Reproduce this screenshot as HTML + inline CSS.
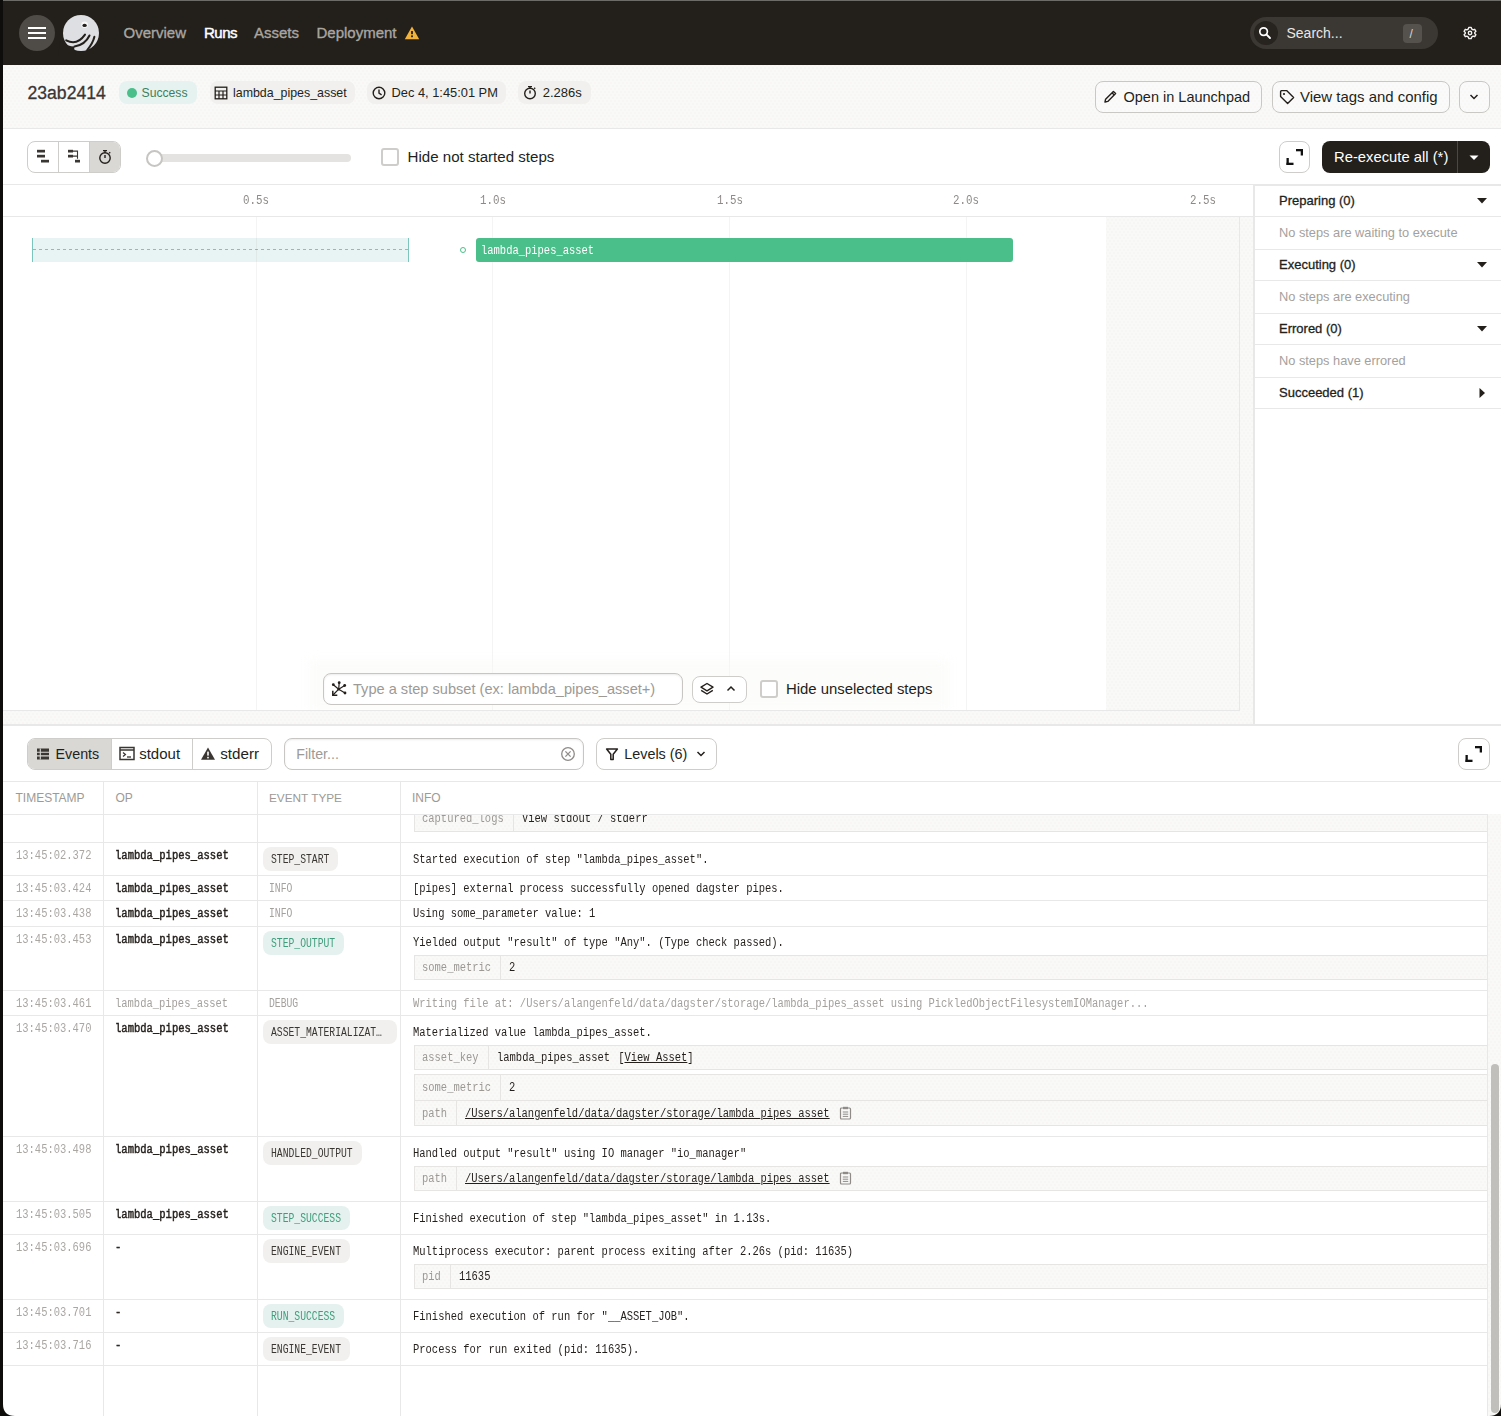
<!DOCTYPE html>
<html><head><meta charset="utf-8">
<style>
*{box-sizing:border-box;margin:0;padding:0}
html,body{width:1501px;height:1416px;overflow:hidden;background:#fff}
body{position:relative;font-family:"Liberation Sans",sans-serif;color:#231f1b}
.a{position:absolute}
.t{position:absolute;white-space:nowrap;line-height:20px;height:20px}
.dots{background-color:#f9f9f8;background-image:radial-gradient(circle,#f0efed 0.5px,transparent 0.8px),radial-gradient(circle,#f0efed 0.5px,transparent 0.8px);background-size:4px 6px;background-position:0 0,2px 3px}
</style></head><body>

<div class="a" style="left:3px;top:1px;width:1498px;height:64px;background:#231f1b"></div>
<div class="a" style="left:19px;top:15px;width:36px;height:36px;background:#4f4b47;border-radius:50%"></div>
<div class="a" style="left:28px;top:27px;width:18px;height:2.2px;background:#fff"></div>
<div class="a" style="left:28px;top:32px;width:18px;height:2.2px;background:#fff"></div>
<div class="a" style="left:28px;top:37px;width:18px;height:2.2px;background:#fff"></div>
<svg class="a" style="left:58px;top:10px" width="46" height="46" viewBox="0 0 46 46">
<circle cx="23" cy="23" r="18" fill="#dedfe3"/>
<path d="M2 31.5 Q10 36.5 16.6 36.6 Q15.4 39.6 17.8 41.4 L17 46 L0 46 Z" fill="#231f1b"/>
<path d="M8.2 30.3 Q19 36 27 24.6" stroke="#231f1b" stroke-width="2" fill="none" stroke-linecap="round"/>
<path d="M16.5 36.4 Q27 35 31.5 25.5" stroke="#231f1b" stroke-width="2" fill="none" stroke-linecap="round"/>
<path d="M29.2 40.2 Q35 33 36.4 26.8" stroke="#231f1b" stroke-width="2" fill="none" stroke-linecap="round"/>
<circle cx="26.6" cy="14.8" r="3.3" fill="#f7f7f8"/>
<ellipse cx="26.6" cy="15.4" rx="2.2" ry="1.6" fill="#231f1b"/>
</svg>
<div class="t" style="left:123.5px;top:23.00px;font-size:15px;color:#a9a6a2;font-weight:400;font-family:'Liberation Sans',sans-serif;letter-spacing:0px;-webkit-text-stroke:0.35px #a9a6a2;">Overview</div>
<div class="t" style="left:204px;top:23.00px;font-size:15px;color:#ffffff;font-weight:400;font-family:'Liberation Sans',sans-serif;letter-spacing:-0.5px;-webkit-text-stroke:0.45px #fff;">Runs</div>
<div class="t" style="left:254px;top:23.00px;font-size:15px;color:#a9a6a2;font-weight:400;font-family:'Liberation Sans',sans-serif;letter-spacing:0px;-webkit-text-stroke:0.35px #a9a6a2;">Assets</div>
<div class="t" style="left:316.5px;top:23.00px;font-size:15px;color:#a9a6a2;font-weight:400;font-family:'Liberation Sans',sans-serif;letter-spacing:0px;-webkit-text-stroke:0.35px #a9a6a2;">Deployment</div>
<svg class="a" style="left:404px;top:25px" width="16" height="16" viewBox="0 0 16 16"><path d="M8 1.5 L15.2 14.2 L0.8 14.2 Z" fill="#f2b33d"/><rect x="7.1" y="6" width="1.8" height="3.2" fill="#231f1b"/><rect x="7.1" y="10.4" width="1.8" height="1.8" fill="#231f1b"/></svg>
<div class="a" style="left:1250px;top:17px;width:188px;height:32px;background:#3b3733;border-radius:16px"></div>
<div class="a" style="left:1254px;top:21px;width:24px;height:24px;background:#27231f;border-radius:50%"></div>
<svg class="a" style="left:1258px;top:26px" width="14" height="14" viewBox="0 0 14 14"><circle cx="5.6" cy="5.6" r="3.8" stroke="#fff" stroke-width="1.7" fill="none"/><path d="M8.4 8.4 L12 12" stroke="#fff" stroke-width="1.9" stroke-linecap="round"/></svg>
<div class="t" style="left:1286.5px;top:23.00px;font-size:14px;color:#e9e7e4;font-weight:400;font-family:'Liberation Sans',sans-serif;letter-spacing:0px;">Search...</div>
<div class="a" style="left:1403px;top:24px;width:19px;height:19px;background:#55514c;border-radius:4px"></div>
<div class="t" style="left:1409.5px;top:23.50px;font-size:12px;color:#d9d7d4;font-weight:400;font-family:'Liberation Sans',sans-serif;letter-spacing:0px;">/</div>
<svg class="a" style="left:1462px;top:25px" width="16" height="16" viewBox="0 0 16 16"><g transform="translate(8 8) scale(0.86)" fill="none" stroke="#f4f3f1" stroke-width="1.6">
<path d="M-1.4 -6.6 L1.4 -6.6 L1.9 -4.7 L3.6 -3.7 L5.5 -4.3 L6.9 -1.9 L5.5 -0.6 L5.5 0.6 L6.9 1.9 L5.5 4.3 L3.6 3.7 L1.9 4.7 L1.4 6.6 L-1.4 6.6 L-1.9 4.7 L-3.6 3.7 L-5.5 4.3 L-6.9 1.9 L-5.5 0.6 L-5.5 -0.6 L-6.9 -1.9 L-5.5 -4.3 L-3.6 -3.7 L-1.9 -4.7 Z" stroke-linejoin="round"/>
<circle r="2"/></g></svg>
<div class="a" style="left:3px;top:65px;width:1498px;height:63px;background:#f9f9f8"></div>
<div class="a dots" style="left:3px;top:65px;width:1498px;height:63px"></div>
<div class="a" style="left:3px;top:128px;width:1498px;height:1px;background:#e8e8e8"></div>
<div class="t" style="left:27.5px;top:83.00px;font-size:17.6px;color:#3a3733;font-weight:400;font-family:'Liberation Sans',sans-serif;letter-spacing:0px;-webkit-text-stroke:0.3px #3a3733;">23ab2414</div>
<div class="a" style="left:119px;top:81px;width:78px;height:23px;background:#e6f2f0;border-radius:8px"></div>
<div class="a" style="left:127px;top:88px;width:10px;height:10px;background:#4bbf8a;border-radius:50%"></div>
<div class="t" style="left:141.5px;top:82.80px;font-size:12.2px;color:#3d7f60;font-weight:400;font-family:'Liberation Sans',sans-serif;letter-spacing:0px;">Success</div>
<div class="a" style="left:209.5px;top:81px;width:145px;height:23px;background:#f1f0ee;border-radius:8px"></div>
<svg class="a" style="left:214px;top:86px" width="14" height="14" viewBox="0 0 14 14"><rect x="1.2" y="1.2" width="11.6" height="11.6" stroke="#231f1b" stroke-width="1.3" fill="none"/><path d="M1 5 H13 M1 9 H13 M5 5 V13 M9 5 V13" stroke="#231f1b" stroke-width="1.2"/></svg>
<div class="t" style="left:233px;top:82.80px;font-size:12.4px;color:#231f1b;font-weight:400;font-family:'Liberation Sans',sans-serif;letter-spacing:0px;">lambda_pipes_asset</div>
<div class="a" style="left:367px;top:81px;width:138.5px;height:23px;background:#f1f0ee;border-radius:8px"></div>
<svg class="a" style="left:372px;top:86px" width="14" height="14" viewBox="0 0 14 14"><circle cx="7" cy="7" r="5.8" stroke="#231f1b" stroke-width="1.4" fill="none"/><path d="M7 3.6 V7.2 L9.6 8.8" stroke="#231f1b" stroke-width="1.4" fill="none"/></svg>
<div class="t" style="left:391.5px;top:82.80px;font-size:12.85px;color:#231f1b;font-weight:400;font-family:'Liberation Sans',sans-serif;letter-spacing:0px;">Dec 4, 1:45:01 PM</div>
<div class="a" style="left:518px;top:81px;width:72.5px;height:23px;background:#f1f0ee;border-radius:8px"></div>
<svg class="a" style="left:523px;top:85px" width="14" height="15" viewBox="0 0 14 15"><circle cx="7" cy="8.5" r="5.3" stroke="#231f1b" stroke-width="1.4" fill="none"/><path d="M5 1.6 H9 M7 2 V3.2 M7 5.6 V8.6 M11.2 3.8 L12.2 2.8" stroke="#231f1b" stroke-width="1.4" fill="none"/></svg>
<div class="t" style="left:542.7px;top:82.80px;font-size:13px;color:#231f1b;font-weight:400;font-family:'Liberation Sans',sans-serif;letter-spacing:0px;">2.286s</div>
<div class="a" style="left:1095px;top:81px;width:167px;height:32px;background:rgba(255,255,255,0.25);border:1px solid #c9c8c5;border-radius:8px"></div>
<svg class="a" style="left:1103px;top:89px" width="15" height="15" viewBox="0 0 15 15"><path d="M2 13 L2.6 10.2 L10.4 2.4 L12.6 4.6 L4.8 12.4 Z M9 3.8 L11.2 6" stroke="#231f1b" stroke-width="1.4" fill="none" stroke-linejoin="round"/></svg>
<div class="t" style="left:1123.5px;top:87.00px;font-size:14.5px;color:#231f1b;font-weight:400;font-family:'Liberation Sans',sans-serif;letter-spacing:0px;">Open in Launchpad</div>
<div class="a" style="left:1271.5px;top:81px;width:178px;height:32px;background:rgba(255,255,255,0.25);border:1px solid #c9c8c5;border-radius:8px"></div>
<svg class="a" style="left:1279px;top:89px" width="16" height="16" viewBox="0 0 16 16"><path d="M1.6 2.4 L1.6 7.6 L8.6 14.6 L14.6 8.6 L7.6 1.6 L2.4 1.6 Z" stroke="#231f1b" stroke-width="1.4" fill="none" stroke-linejoin="round"/><circle cx="5" cy="5" r="1.1" fill="#231f1b"/></svg>
<div class="t" style="left:1300px;top:87.00px;font-size:14.95px;color:#231f1b;font-weight:400;font-family:'Liberation Sans',sans-serif;letter-spacing:0px;">View tags and config</div>
<div class="a" style="left:1458.5px;top:81px;width:31px;height:32px;background:rgba(255,255,255,0.25);border:1px solid #c9c8c5;border-radius:8px"></div>
<svg class="a" style="left:1468px;top:93px" width="12" height="8" viewBox="0 0 12 8"><path d="M2.5 2 L6 5.5 L9.5 2" stroke="#231f1b" stroke-width="1.5" fill="none"/></svg>
<div class="a" style="left:3px;top:129px;width:1498px;height:55px;background:#fff"></div>
<div class="a" style="left:3px;top:184px;width:1250px;height:1px;background:#e8e8e8"></div>
<div class="a" style="left:1253px;top:184px;width:248px;height:2px;background:#e8e8e8"></div>
<div class="a" style="left:27px;top:141px;width:94px;height:32px;background:#fff;border:1px solid #cfcdca;border-radius:8px;overflow:hidden"></div>
<div class="a" style="left:89px;top:142px;width:31px;height:30px;background:#dad8d5;border-radius:0 7px 7px 0"></div>
<div class="a" style="left:58px;top:142px;width:1px;height:30px;background:#cfcdca"></div>
<div class="a" style="left:89px;top:142px;width:1px;height:30px;background:#cfcdca"></div>
<svg class="a" style="left:36px;top:149px" width="16" height="16" viewBox="0 0 16 16"><rect x="1" y="0.8" width="8" height="2.7" fill="#3a3733"/><rect x="1" y="5.8" width="8" height="2.7" fill="#3a3733"/><rect x="5" y="10.8" width="8" height="2.7" fill="#3a3733"/></svg>
<svg class="a" style="left:67px;top:149px" width="16" height="16" viewBox="0 0 16 16"><rect x="1" y="0.8" width="5" height="2.7" fill="#3a3733"/><rect x="1" y="5.8" width="5" height="2.7" fill="#3a3733"/><rect x="8" y="10.8" width="5" height="2.7" fill="#3a3733"/><path d="M6 2.1 H10.5 V9.8 M6 7.1 H10.5" stroke="#3a3733" stroke-width="1.1" fill="none"/></svg>
<svg class="a" style="left:97px;top:149px" width="16" height="16" viewBox="0 0 16 16"><circle cx="8" cy="9" r="5.2" stroke="#231f1b" stroke-width="1.4" fill="none"/><path d="M6 1.6 H10 M8 2 V3.6 M8 6 V9 M12.2 4.2 L13.2 3.2" stroke="#231f1b" stroke-width="1.4" fill="none"/></svg>
<div class="a" style="left:154px;top:154px;width:197px;height:8px;background:#e4e3e1;border-radius:4px"></div>
<div class="a" style="left:145.5px;top:149.5px;width:17px;height:17px;background:#fff;border:2px solid #c7c5c2;border-radius:50%"></div>
<div class="a" style="left:381px;top:148px;width:18px;height:18px;background:#fff;border:2px solid #cfcdca;border-radius:3px"></div>
<div class="t" style="left:407.5px;top:147.00px;font-size:15.1px;color:#231f1b;font-weight:400;font-family:'Liberation Sans',sans-serif;letter-spacing:0px;">Hide not started steps</div>
<div class="a" style="left:1278.5px;top:141px;width:31px;height:32px;background:#fff;border:1px solid #cfcdca;border-radius:8px"></div>
<svg class="a" style="left:1278.5px;top:141px" width="31" height="32" viewBox="0 0 31 32"><rect x="17" y="8" width="7" height="2.3" fill="#111"/><rect x="21.7" y="8" width="2.3" height="6.5" fill="#111"/><rect x="7.5" y="17" width="2.3" height="7" fill="#111"/><rect x="7.5" y="21.7" width="7" height="2.3" fill="#111"/></svg>
<div class="a" style="left:1322px;top:141px;width:168px;height:32px;background:#231f1b;border-radius:8px"></div>
<div class="a" style="left:1457px;top:141px;width:1px;height:32px;background:#4b4743"></div>
<div class="t" style="left:1334px;top:147.00px;font-size:14.8px;color:#ffffff;font-weight:400;font-family:'Liberation Sans',sans-serif;letter-spacing:0px;">Re-execute all (*)</div>
<svg class="a" style="left:1468px;top:154px" width="12" height="8" viewBox="0 0 12 8"><path d="M1.5 1.5 L10.5 1.5 L6 6 Z" fill="#fff"/></svg>
<div class="a" style="left:3px;top:185px;width:1250px;height:31px;background:#fff"></div>
<div class="a" style="left:3px;top:216px;width:1500px;height:1px;background:#e8e8e8"></div>
<div class="a" style="left:1253px;top:186px;width:2px;height:538px;background:#e8e8e8"></div>
<div class="t" style="left:243px;top:191.26px;font-size:12px;color:#8d8a86;font-weight:400;font-family:'Liberation Mono',monospace;letter-spacing:0px;transform:scaleX(0.9);transform-origin:0 0;">0.5s</div>
<div class="t" style="left:479.5px;top:191.26px;font-size:12px;color:#8d8a86;font-weight:400;font-family:'Liberation Mono',monospace;letter-spacing:0px;transform:scaleX(0.9);transform-origin:0 0;">1.0s</div>
<div class="t" style="left:716.5px;top:191.26px;font-size:12px;color:#8d8a86;font-weight:400;font-family:'Liberation Mono',monospace;letter-spacing:0px;transform:scaleX(0.9);transform-origin:0 0;">1.5s</div>
<div class="t" style="left:953px;top:191.26px;font-size:12px;color:#8d8a86;font-weight:400;font-family:'Liberation Mono',monospace;letter-spacing:0px;transform:scaleX(0.9);transform-origin:0 0;">2.0s</div>
<div class="t" style="left:1189.5px;top:191.26px;font-size:12px;color:#8d8a86;font-weight:400;font-family:'Liberation Mono',monospace;letter-spacing:0px;transform:scaleX(0.9);transform-origin:0 0;">2.5s</div>
<div class="a" style="left:3px;top:217px;width:1237px;height:493px;background:#fff"></div>
<div class="a" style="left:1239px;top:217px;width:1px;height:493px;background:#e9e8e6"></div>
<div class="a" style="left:32px;top:238px;width:377px;height:24px;background:#e8f4f3"></div>
<div class="a" style="left:32px;top:238px;width:1px;height:24px;background:#7cc5bc"></div>
<div class="a" style="left:408px;top:238px;width:1px;height:24px;background:#7cc5bc"></div>
<div class="a" style="left:33px;top:249px;width:375px;height:1px;background-image:linear-gradient(90deg,#7cc5bc 50%,transparent 50%);background-size:6px 1px"></div>
<div class="a" style="left:256px;top:217px;width:1px;height:493px;background:rgba(0,0,0,0.045)"></div>
<div class="a" style="left:492px;top:217px;width:1px;height:493px;background:rgba(0,0,0,0.045)"></div>
<div class="a" style="left:729px;top:217px;width:1px;height:493px;background:rgba(0,0,0,0.045)"></div>
<div class="a" style="left:966px;top:217px;width:1px;height:493px;background:rgba(0,0,0,0.045)"></div>
<div class="a" style="left:1202px;top:217px;width:1px;height:493px;background:rgba(0,0,0,0.045)"></div>
<div class="a dots" style="left:1106px;top:217px;width:134px;height:493px"></div>
<div class="a" style="left:460px;top:246.8px;width:6px;height:6px;border:1.4px solid #4bbf8a;border-radius:50%;background:#fff"></div>
<div class="a" style="left:476px;top:238px;width:537px;height:24px;background:#4bbf8a;border-radius:3px"></div>
<div class="t" style="left:480.5px;top:240.76px;font-size:12px;color:#ffffff;font-weight:400;font-family:'Liberation Mono',monospace;letter-spacing:0px;transform:scaleX(0.873);transform-origin:0 0;">lambda_pipes_asset</div>
<div class="a" style="left:309px;top:660px;width:640px;height:50px;background:rgba(249,249,247,0.45);filter:blur(5px)"></div>
<div class="a" style="left:323px;top:673px;width:360px;height:32px;background:#fff;border:1px solid #c8c6c3;border-radius:8px;box-shadow:inset 0 1px 2px rgba(0,0,0,0.08)"></div>
<svg class="a" style="left:331px;top:681px" width="17" height="17" viewBox="0 0 17 17"><g stroke="#231f1b" stroke-width="1.2" fill="none"><path d="M7.7 8.2 L8.2 1.5 M7.7 8.2 L2.3 3.7 M7.7 8.2 L13.7 4.5 M7.7 8.2 L14 12 M7.7 8.2 L2 14"/><path d="M1.8 9.8 V14.3 H6.3" stroke-width="1.5"/></g><g fill="#231f1b"><circle cx="8.2" cy="1.7" r="1.4"/><circle cx="2.3" cy="3.7" r="1.4"/><circle cx="13.7" cy="4.5" r="1.4"/><circle cx="14" cy="12" r="1.4"/><circle cx="7.7" cy="8.2" r="1.3"/></g></svg>
<div class="t" style="left:353px;top:679.00px;font-size:14.6px;color:#9d9a96;font-weight:400;font-family:'Liberation Sans',sans-serif;letter-spacing:0px;">Type a step subset (ex: lambda_pipes_asset+)</div>
<div class="a" style="left:691.5px;top:675.5px;width:55.5px;height:27.5px;background:#fff;border:1px solid #cfcdca;border-radius:8px"></div>
<svg class="a" style="left:699px;top:682px" width="16" height="14" viewBox="0 0 16 14"><path d="M8 1.5 L14 5.2 L8 8.9 L2 5.2 Z" stroke="#231f1b" stroke-width="1.4" fill="none" stroke-linejoin="round"/><path d="M2.2 8.3 L8 12 L13.8 8.3" stroke="#231f1b" stroke-width="1.4" fill="none"/></svg>
<svg class="a" style="left:725px;top:684px" width="12" height="10" viewBox="0 0 12 10"><path d="M2.5 6.5 L6 3 L9.5 6.5" stroke="#231f1b" stroke-width="1.5" fill="none"/></svg>
<div class="a" style="left:759.5px;top:680px;width:18px;height:18px;background:#fff;border:2px solid #cfcdca;border-radius:3px"></div>
<div class="t" style="left:786px;top:679.00px;font-size:14.9px;color:#231f1b;font-weight:400;font-family:'Liberation Sans',sans-serif;letter-spacing:0px;">Hide unselected steps</div>
<div class="a" style="left:3px;top:710px;width:1237px;height:1px;background:#e8e8e8"></div>
<div class="a" style="left:1239px;top:217px;width:1px;height:494px;background:#e8e8e8"></div>
<div class="a dots" style="left:3px;top:711px;width:1250px;height:13px"></div>
<div class="a dots" style="left:1240px;top:217px;width:13px;height:494px"></div>
<div class="a" style="left:3px;top:724px;width:1498px;height:2px;background:#e8e8e8"></div>
<div class="a" style="left:1255px;top:186px;width:246px;height:538px;background:#fff"></div>
<div class="a" style="left:1255px;top:216px;width:246px;height:1px;background:#e8e8e8"></div>
<div class="t" style="left:1279px;top:191.00px;font-size:13px;color:#231f1b;font-weight:400;font-family:'Liberation Sans',sans-serif;letter-spacing:0px;-webkit-text-stroke:0.3px #231f1b;">Preparing (0)</div>
<svg class="a" style="left:1476px;top:196px" width="12" height="10" viewBox="0 0 12 10"><path d="M1 2 L11 2 L6 7.5 Z" fill="#231f1b"/></svg>
<div class="a" style="left:1255px;top:216px;width:246px;height:1px;background:#e8e8e8"></div>
<div class="t" style="left:1279px;top:223.00px;font-size:12.8px;color:#a4a19d;font-weight:400;font-family:'Liberation Sans',sans-serif;letter-spacing:0px;">No steps are waiting to execute</div>
<div class="a" style="left:1255px;top:249px;width:246px;height:1px;background:#e8e8e8"></div>
<div class="t" style="left:1279px;top:255.00px;font-size:13px;color:#231f1b;font-weight:400;font-family:'Liberation Sans',sans-serif;letter-spacing:0px;-webkit-text-stroke:0.3px #231f1b;">Executing (0)</div>
<svg class="a" style="left:1476px;top:260px" width="12" height="10" viewBox="0 0 12 10"><path d="M1 2 L11 2 L6 7.5 Z" fill="#231f1b"/></svg>
<div class="a" style="left:1255px;top:280px;width:246px;height:1px;background:#e8e8e8"></div>
<div class="t" style="left:1279px;top:287.00px;font-size:12.8px;color:#a4a19d;font-weight:400;font-family:'Liberation Sans',sans-serif;letter-spacing:0px;">No steps are executing</div>
<div class="a" style="left:1255px;top:313px;width:246px;height:1px;background:#e8e8e8"></div>
<div class="t" style="left:1279px;top:319.00px;font-size:13px;color:#231f1b;font-weight:400;font-family:'Liberation Sans',sans-serif;letter-spacing:0px;-webkit-text-stroke:0.3px #231f1b;">Errored (0)</div>
<svg class="a" style="left:1476px;top:324px" width="12" height="10" viewBox="0 0 12 10"><path d="M1 2 L11 2 L6 7.5 Z" fill="#231f1b"/></svg>
<div class="a" style="left:1255px;top:344px;width:246px;height:1px;background:#e8e8e8"></div>
<div class="t" style="left:1279px;top:351.00px;font-size:12.8px;color:#a4a19d;font-weight:400;font-family:'Liberation Sans',sans-serif;letter-spacing:0px;">No steps have errored</div>
<div class="a" style="left:1255px;top:377px;width:246px;height:1px;background:#e8e8e8"></div>
<div class="t" style="left:1279px;top:383.00px;font-size:13px;color:#231f1b;font-weight:400;font-family:'Liberation Sans',sans-serif;letter-spacing:0px;-webkit-text-stroke:0.3px #231f1b;">Succeeded (1)</div>
<svg class="a" style="left:1477px;top:387px" width="10" height="12" viewBox="0 0 10 12"><path d="M2.5 1 L8 6 L2.5 11 Z" fill="#231f1b"/></svg>
<div class="a" style="left:1255px;top:408px;width:246px;height:1px;background:#e8e8e8"></div>
<div class="a" style="left:3px;top:726px;width:1498px;height:55px;background:#fff"></div>
<div class="a" style="left:27px;top:738px;width:244.5px;height:31.5px;background:#fff;border:1px solid #cfcdca;border-radius:8px;overflow:hidden"></div>
<div class="a" style="left:28px;top:739px;width:83px;height:29.5px;background:#dad8d5;border-radius:7px 0 0 7px"></div>
<div class="a" style="left:111px;top:739px;width:1px;height:29.5px;background:#cfcdca"></div>
<div class="a" style="left:192px;top:739px;width:1px;height:29.5px;background:#cfcdca"></div>
<svg class="a" style="left:36px;top:747px" width="14" height="14" viewBox="0 0 14 14"><rect x="1" y="1.5" width="12" height="11" fill="#3a3733"/><path d="M1 5.2 H13 M1 8.9 H13 M4.3 1.5 V12.5" stroke="#dad8d5" stroke-width="1.1"/></svg>
<div class="t" style="left:55.5px;top:743.50px;font-size:14.3px;color:#231f1b;font-weight:400;font-family:'Liberation Sans',sans-serif;letter-spacing:0px;">Events</div>
<svg class="a" style="left:119px;top:746px" width="16" height="15" viewBox="0 0 16 15"><rect x="1" y="1.5" width="14" height="12" stroke="#3a3733" stroke-width="1.5" fill="none"/><path d="M1 4 H15" stroke="#3a3733" stroke-width="1.5"/><path d="M4 6.6 L6.4 8.6 L4 10.6" stroke="#3a3733" stroke-width="1.3" fill="none"/><path d="M8 11 H12" stroke="#3a3733" stroke-width="1.3"/></svg>
<div class="t" style="left:139.2px;top:743.50px;font-size:15px;color:#231f1b;font-weight:400;font-family:'Liberation Sans',sans-serif;letter-spacing:0px;">stdout</div>
<svg class="a" style="left:200px;top:746px" width="16" height="15" viewBox="0 0 16 15"><path d="M8 1.5 L15 13.8 L1 13.8 Z" fill="#3a3733"/><rect x="7.2" y="5.6" width="1.6" height="4" fill="#fff"/><rect x="7.2" y="10.8" width="1.6" height="1.6" fill="#fff"/></svg>
<div class="t" style="left:220.2px;top:743.50px;font-size:15.2px;color:#231f1b;font-weight:400;font-family:'Liberation Sans',sans-serif;letter-spacing:0px;">stderr</div>
<div class="a" style="left:284px;top:738px;width:299.5px;height:31.5px;background:#fff;border:1px solid #c8c6c3;border-radius:8px;box-shadow:inset 0 1px 2px rgba(0,0,0,0.08)"></div>
<div class="t" style="left:296.3px;top:743.50px;font-size:14.2px;color:#9d9a96;font-weight:400;font-family:'Liberation Sans',sans-serif;letter-spacing:0px;">Filter...</div>
<svg class="a" style="left:560px;top:746px" width="16" height="16" viewBox="0 0 16 16"><circle cx="8" cy="8" r="6.3" stroke="#8f8c88" stroke-width="1.3" fill="none"/><path d="M5.4 5.4 L10.6 10.6 M10.6 5.4 L5.4 10.6" stroke="#8f8c88" stroke-width="1.3"/></svg>
<div class="a" style="left:596px;top:738px;width:120.5px;height:31.5px;background:#fff;border:1px solid #cfcdca;border-radius:8px"></div>
<svg class="a" style="left:605px;top:747px" width="14" height="14" viewBox="0 0 14 14"><path d="M1.6 2 H12.4 L8.2 7.2 V12.6 H5.8 V7.2 Z" stroke="#231f1b" stroke-width="1.5" fill="none" stroke-linejoin="round"/></svg>
<div class="t" style="left:624.2px;top:743.50px;font-size:14.4px;color:#231f1b;font-weight:400;font-family:'Liberation Sans',sans-serif;letter-spacing:0px;">Levels (6)</div>
<svg class="a" style="left:695px;top:749px" width="12" height="10" viewBox="0 0 12 10"><path d="M2.5 3 L6 6.5 L9.5 3" stroke="#231f1b" stroke-width="1.5" fill="none"/></svg>
<div class="a" style="left:1458px;top:738px;width:31.5px;height:31.5px;background:#fff;border:1px solid #cfcdca;border-radius:8px"></div>
<svg class="a" style="left:1458px;top:738px" width="31" height="32" viewBox="0 0 31 32"><rect x="17" y="8" width="7" height="2.3" fill="#111"/><rect x="21.7" y="8" width="2.3" height="6.5" fill="#111"/><rect x="7.5" y="17" width="2.3" height="7" fill="#111"/><rect x="7.5" y="21.7" width="7" height="2.3" fill="#111"/></svg>
<div class="a" style="left:3px;top:781px;width:1498px;height:1px;background:#e8e8e8"></div>
<div class="a" style="left:3px;top:782px;width:1498px;height:32px;background:#fff"></div>
<div class="t" style="left:15.5px;top:787.50px;font-size:12px;color:#9d9a96;font-weight:400;font-family:'Liberation Sans',sans-serif;letter-spacing:0px;">TIMESTAMP</div>
<div class="t" style="left:115.5px;top:787.50px;font-size:12px;color:#9d9a96;font-weight:400;font-family:'Liberation Sans',sans-serif;letter-spacing:0px;">OP</div>
<div class="t" style="left:269px;top:787.50px;font-size:11.8px;color:#9d9a96;font-weight:400;font-family:'Liberation Sans',sans-serif;letter-spacing:0px;">EVENT TYPE</div>
<div class="t" style="left:412px;top:787.50px;font-size:12px;color:#9d9a96;font-weight:400;font-family:'Liberation Sans',sans-serif;letter-spacing:0px;">INFO</div>
<div class="a" style="left:3px;top:814px;width:1484px;height:1px;background:#e8e8e8"></div>
<div class="a" style="left:103px;top:782px;width:1px;height:634px;background:#e8e8e8"></div>
<div class="a" style="left:257px;top:782px;width:1px;height:634px;background:#e8e8e8"></div>
<div class="a" style="left:400px;top:782px;width:1px;height:634px;background:#e8e8e8"></div>
<div class="a dots" style="left:413.5px;top:804px;width:1074px;height:27.5px;border:1px solid #e6e5e3;border-right:none"></div>
<div class="a" style="left:513.0px;top:804px;width:1px;height:27.5px;background:#e6e5e3"></div>
<div class="t" style="left:422.0px;top:809.01px;font-size:12px;color:#9c9995;font-weight:400;font-family:'Liberation Mono',monospace;letter-spacing:0px;transform:scaleX(0.873);transform-origin:0 0;">captured_logs</div>
<div class="t" style="left:522.0px;top:809.01px;font-size:12px;color:#231f1b;font-weight:400;font-family:'Liberation Mono',monospace;letter-spacing:0px;transform:scaleX(0.873);transform-origin:0 0;">View stdout / stderr</div>
<div class="a" style="left:3px;top:782px;width:1484px;height:32px;background:#fff"></div>
<div class="t" style="left:15.5px;top:787.50px;font-size:12px;color:#9d9a96;font-weight:400;font-family:'Liberation Sans',sans-serif;letter-spacing:0px;">TIMESTAMP</div>
<div class="t" style="left:115.5px;top:787.50px;font-size:12px;color:#9d9a96;font-weight:400;font-family:'Liberation Sans',sans-serif;letter-spacing:0px;">OP</div>
<div class="t" style="left:269px;top:787.50px;font-size:11.8px;color:#9d9a96;font-weight:400;font-family:'Liberation Sans',sans-serif;letter-spacing:0px;">EVENT TYPE</div>
<div class="t" style="left:412px;top:787.50px;font-size:12px;color:#9d9a96;font-weight:400;font-family:'Liberation Sans',sans-serif;letter-spacing:0px;">INFO</div>
<div class="a" style="left:103px;top:782px;width:1px;height:32px;background:#e8e8e8"></div>
<div class="a" style="left:257px;top:782px;width:1px;height:32px;background:#e8e8e8"></div>
<div class="a" style="left:400px;top:782px;width:1px;height:32px;background:#e8e8e8"></div>
<div class="a" style="left:1487px;top:782px;width:14px;height:32px;background:#fff"></div>
<div class="a" style="left:3px;top:814px;width:1498px;height:1px;background:#e8e8e8"></div>
<div class="a" style="left:3px;top:842px;width:1484px;height:1px;background:#e8e8e8"></div>
<div class="a" style="left:3px;top:875px;width:1484px;height:1px;background:#e8e8e8"></div>
<div class="t" style="left:15.5px;top:846.06px;font-size:12px;color:#aaa7a3;font-weight:400;font-family:'Liberation Mono',monospace;letter-spacing:0px;transform:scaleX(0.873);transform-origin:0 0;">13:45:02.372</div>
<div class="t" style="left:115px;top:846.06px;font-size:12px;color:#231f1b;font-weight:400;font-family:'Liberation Mono',monospace;letter-spacing:0px;transform:scaleX(0.878);transform-origin:0 0;-webkit-text-stroke:0.45px #231f1b;">lambda_pipes_asset</div>
<div class="a" style="left:262.5px;top:847px;width:75.5px;height:24px;background:#f1f0ee;border-radius:8px"></div>
<div class="t" style="left:270.7px;top:850.11px;font-size:12.8px;color:#3a3733;font-weight:400;font-family:'Liberation Mono',monospace;letter-spacing:0px;transform:scaleX(0.76);transform-origin:0 0;">STEP_START</div>
<div class="t" style="left:413px;top:849.76px;font-size:12px;color:#231f1b;font-weight:400;font-family:'Liberation Mono',monospace;letter-spacing:0px;transform:scaleX(0.873);transform-origin:0 0;">Started execution of step "lambda_pipes_asset".</div>
<div class="a" style="left:3px;top:900px;width:1484px;height:1px;background:#e8e8e8"></div>
<div class="t" style="left:15.5px;top:879.06px;font-size:12px;color:#aaa7a3;font-weight:400;font-family:'Liberation Mono',monospace;letter-spacing:0px;transform:scaleX(0.873);transform-origin:0 0;">13:45:03.424</div>
<div class="t" style="left:115px;top:879.06px;font-size:12px;color:#231f1b;font-weight:400;font-family:'Liberation Mono',monospace;letter-spacing:0px;transform:scaleX(0.878);transform-origin:0 0;-webkit-text-stroke:0.45px #231f1b;">lambda_pipes_asset</div>
<div class="t" style="left:269px;top:879.11px;font-size:12.8px;color:#a4a19d;font-weight:400;font-family:'Liberation Mono',monospace;letter-spacing:0px;transform:scaleX(0.76);transform-origin:0 0;">INFO</div>
<div class="t" style="left:413px;top:879.06px;font-size:12px;color:#231f1b;font-weight:400;font-family:'Liberation Mono',monospace;letter-spacing:0px;transform:scaleX(0.873);transform-origin:0 0;">[pipes] external process successfully opened dagster pipes.</div>
<div class="a" style="left:3px;top:925.5px;width:1484px;height:1px;background:#e8e8e8"></div>
<div class="t" style="left:15.5px;top:904.06px;font-size:12px;color:#aaa7a3;font-weight:400;font-family:'Liberation Mono',monospace;letter-spacing:0px;transform:scaleX(0.873);transform-origin:0 0;">13:45:03.438</div>
<div class="t" style="left:115px;top:904.06px;font-size:12px;color:#231f1b;font-weight:400;font-family:'Liberation Mono',monospace;letter-spacing:0px;transform:scaleX(0.878);transform-origin:0 0;-webkit-text-stroke:0.45px #231f1b;">lambda_pipes_asset</div>
<div class="t" style="left:269px;top:904.11px;font-size:12.8px;color:#a4a19d;font-weight:400;font-family:'Liberation Mono',monospace;letter-spacing:0px;transform:scaleX(0.76);transform-origin:0 0;">INFO</div>
<div class="t" style="left:413px;top:904.06px;font-size:12px;color:#231f1b;font-weight:400;font-family:'Liberation Mono',monospace;letter-spacing:0px;transform:scaleX(0.873);transform-origin:0 0;">Using some_parameter value: 1</div>
<div class="a" style="left:3px;top:990.0px;width:1484px;height:1px;background:#e8e8e8"></div>
<div class="t" style="left:15.5px;top:929.56px;font-size:12px;color:#aaa7a3;font-weight:400;font-family:'Liberation Mono',monospace;letter-spacing:0px;transform:scaleX(0.873);transform-origin:0 0;">13:45:03.453</div>
<div class="t" style="left:115px;top:929.56px;font-size:12px;color:#231f1b;font-weight:400;font-family:'Liberation Mono',monospace;letter-spacing:0px;transform:scaleX(0.878);transform-origin:0 0;-webkit-text-stroke:0.45px #231f1b;">lambda_pipes_asset</div>
<div class="a" style="left:262.5px;top:930.5px;width:81px;height:24px;border-radius:8px;background:#e4f1ee"></div>
<div class="t" style="left:270.7px;top:933.61px;font-size:12.8px;color:#3f9d7c;font-weight:400;font-family:'Liberation Mono',monospace;letter-spacing:0px;transform:scaleX(0.76);transform-origin:0 0;">STEP_OUTPUT</div>
<div class="t" style="left:413px;top:933.26px;font-size:12px;color:#231f1b;font-weight:400;font-family:'Liberation Mono',monospace;letter-spacing:0px;transform:scaleX(0.873);transform-origin:0 0;">Yielded output "result" of type "Any". (Type check passed).</div>
<div class="a dots" style="left:413.5px;top:954.5px;width:1074px;height:25px;border:1px solid #e6e5e3;border-right:none"></div>
<div class="a" style="left:499.5px;top:954.5px;width:1px;height:25px;background:#e6e5e3"></div>
<div class="t" style="left:422.0px;top:958.26px;font-size:12px;color:#9c9995;font-weight:400;font-family:'Liberation Mono',monospace;letter-spacing:0px;transform:scaleX(0.873);transform-origin:0 0;">some_metric</div>
<div class="t" style="left:508.5px;top:958.26px;font-size:12px;color:#231f1b;font-weight:400;font-family:'Liberation Mono',monospace;letter-spacing:0px;transform:scaleX(0.873);transform-origin:0 0;">2</div>
<div class="a" style="left:3px;top:1015px;width:1484px;height:1px;background:#e8e8e8"></div>
<div class="t" style="left:15.5px;top:994.06px;font-size:12px;color:#aaa7a3;font-weight:400;font-family:'Liberation Mono',monospace;letter-spacing:0px;transform:scaleX(0.873);transform-origin:0 0;">13:45:03.461</div>
<div class="t" style="left:114.5px;top:994.06px;font-size:12px;color:#a4a19d;font-weight:400;font-family:'Liberation Mono',monospace;letter-spacing:0px;transform:scaleX(0.873);transform-origin:0 0;">lambda_pipes_asset</div>
<div class="t" style="left:269px;top:994.11px;font-size:12.8px;color:#a4a19d;font-weight:400;font-family:'Liberation Mono',monospace;letter-spacing:0px;transform:scaleX(0.76);transform-origin:0 0;">DEBUG</div>
<div class="t" style="left:413px;top:994.06px;font-size:12px;color:#a4a19d;font-weight:400;font-family:'Liberation Mono',monospace;letter-spacing:0px;transform:scaleX(0.873);transform-origin:0 0;">Writing file at: /Users/alangenfeld/data/dagster/storage/lambda_pipes_asset using PickledObjectFilesystemIOManager...</div>
<div class="a" style="left:3px;top:1136px;width:1484px;height:1px;background:#e8e8e8"></div>
<div class="t" style="left:15.5px;top:1019.06px;font-size:12px;color:#aaa7a3;font-weight:400;font-family:'Liberation Mono',monospace;letter-spacing:0px;transform:scaleX(0.873);transform-origin:0 0;">13:45:03.470</div>
<div class="t" style="left:115px;top:1019.06px;font-size:12px;color:#231f1b;font-weight:400;font-family:'Liberation Mono',monospace;letter-spacing:0px;transform:scaleX(0.878);transform-origin:0 0;-webkit-text-stroke:0.45px #231f1b;">lambda_pipes_asset</div>
<div class="a" style="left:262.5px;top:1020px;width:134px;height:24px;background:#f1f0ee;border-radius:8px"></div>
<div class="t" style="left:270.7px;top:1023.11px;font-size:12.8px;color:#3a3733;font-weight:400;font-family:'Liberation Mono',monospace;letter-spacing:0px;transform:scaleX(0.76);transform-origin:0 0;">ASSET_MATERIALIZAT…</div>
<div class="t" style="left:413px;top:1022.76px;font-size:12px;color:#231f1b;font-weight:400;font-family:'Liberation Mono',monospace;letter-spacing:0px;transform:scaleX(0.873);transform-origin:0 0;">Materialized value lambda_pipes_asset.</div>
<div class="a dots" style="left:413.5px;top:1044.5px;width:1074px;height:25px;border:1px solid #e6e5e3;border-right:none"></div>
<div class="a" style="left:487.5px;top:1044.5px;width:1px;height:25px;background:#e6e5e3"></div>
<div class="t" style="left:422.0px;top:1048.26px;font-size:12px;color:#9c9995;font-weight:400;font-family:'Liberation Mono',monospace;letter-spacing:0px;transform:scaleX(0.873);transform-origin:0 0;">asset_key</div>
<div class="t" style="left:496.5px;top:1048.26px;font-size:12px;color:#231f1b;font-weight:400;font-family:'Liberation Mono',monospace;letter-spacing:0px;transform:scaleX(0.873);transform-origin:0 0;">lambda_pipes_asset <span style="margin-left:2px">[<u>View Asset</u>]</span></div>
<div class="a dots" style="left:413.5px;top:1074px;width:1074px;height:51.5px;border:1px solid #e6e5e3;border-right:none"></div>
<div class="a" style="left:499.5px;top:1074px;width:1px;height:26px;background:#e6e5e3"></div>
<div class="t" style="left:422.0px;top:1078.26px;font-size:12px;color:#9c9995;font-weight:400;font-family:'Liberation Mono',monospace;letter-spacing:0px;transform:scaleX(0.873);transform-origin:0 0;">some_metric</div>
<div class="t" style="left:508.5px;top:1078.26px;font-size:12px;color:#231f1b;font-weight:400;font-family:'Liberation Mono',monospace;letter-spacing:0px;transform:scaleX(0.873);transform-origin:0 0;">2</div>
<div class="a" style="left:413.5px;top:1100px;width:1074px;height:1px;background:#e6e5e3"></div>
<div class="a" style="left:455.5px;top:1100px;width:1px;height:25.5px;background:#e6e5e3"></div>
<div class="t" style="left:422.0px;top:1104.01px;font-size:12px;color:#9c9995;font-weight:400;font-family:'Liberation Mono',monospace;letter-spacing:0px;transform:scaleX(0.873);transform-origin:0 0;">path</div>
<div class="t" style="left:464.5px;top:1104.01px;font-size:12px;color:#231f1b;font-weight:400;font-family:'Liberation Mono',monospace;letter-spacing:0px;transform:scaleX(0.873);transform-origin:0 0;"><u>/Users/alangenfeld/data/dagster/storage/lambda_pipes_asset</u></div>
<div class="a" style="left:3px;top:1201px;width:1484px;height:1px;background:#e8e8e8"></div>
<div class="t" style="left:15.5px;top:1140.06px;font-size:12px;color:#aaa7a3;font-weight:400;font-family:'Liberation Mono',monospace;letter-spacing:0px;transform:scaleX(0.873);transform-origin:0 0;">13:45:03.498</div>
<div class="t" style="left:115px;top:1140.06px;font-size:12px;color:#231f1b;font-weight:400;font-family:'Liberation Mono',monospace;letter-spacing:0px;transform:scaleX(0.878);transform-origin:0 0;-webkit-text-stroke:0.45px #231f1b;">lambda_pipes_asset</div>
<div class="a" style="left:262.5px;top:1141px;width:99.5px;height:24px;background:#f1f0ee;border-radius:8px"></div>
<div class="t" style="left:270.7px;top:1144.11px;font-size:12.8px;color:#3a3733;font-weight:400;font-family:'Liberation Mono',monospace;letter-spacing:0px;transform:scaleX(0.76);transform-origin:0 0;">HANDLED_OUTPUT</div>
<div class="t" style="left:413px;top:1143.76px;font-size:12px;color:#231f1b;font-weight:400;font-family:'Liberation Mono',monospace;letter-spacing:0px;transform:scaleX(0.873);transform-origin:0 0;">Handled output "result" using IO manager "io_manager"</div>
<div class="a dots" style="left:413.5px;top:1165.5px;width:1074px;height:25px;border:1px solid #e6e5e3;border-right:none"></div>
<div class="a" style="left:455.5px;top:1165.5px;width:1px;height:25px;background:#e6e5e3"></div>
<div class="t" style="left:422.0px;top:1169.26px;font-size:12px;color:#9c9995;font-weight:400;font-family:'Liberation Mono',monospace;letter-spacing:0px;transform:scaleX(0.873);transform-origin:0 0;">path</div>
<div class="t" style="left:464.5px;top:1169.26px;font-size:12px;color:#231f1b;font-weight:400;font-family:'Liberation Mono',monospace;letter-spacing:0px;transform:scaleX(0.873);transform-origin:0 0;"><u>/Users/alangenfeld/data/dagster/storage/lambda_pipes_asset</u></div>
<div class="a" style="left:3px;top:1234px;width:1484px;height:1px;background:#e8e8e8"></div>
<div class="t" style="left:15.5px;top:1205.06px;font-size:12px;color:#aaa7a3;font-weight:400;font-family:'Liberation Mono',monospace;letter-spacing:0px;transform:scaleX(0.873);transform-origin:0 0;">13:45:03.505</div>
<div class="t" style="left:115px;top:1205.06px;font-size:12px;color:#231f1b;font-weight:400;font-family:'Liberation Mono',monospace;letter-spacing:0px;transform:scaleX(0.878);transform-origin:0 0;-webkit-text-stroke:0.45px #231f1b;">lambda_pipes_asset</div>
<div class="a" style="left:262.5px;top:1206px;width:87px;height:24px;border-radius:8px;background:#e4f1ee"></div>
<div class="t" style="left:270.7px;top:1209.11px;font-size:12.8px;color:#3f9d7c;font-weight:400;font-family:'Liberation Mono',monospace;letter-spacing:0px;transform:scaleX(0.76);transform-origin:0 0;">STEP_SUCCESS</div>
<div class="t" style="left:413px;top:1208.76px;font-size:12px;color:#231f1b;font-weight:400;font-family:'Liberation Mono',monospace;letter-spacing:0px;transform:scaleX(0.873);transform-origin:0 0;">Finished execution of step "lambda_pipes_asset" in 1.13s.</div>
<div class="a" style="left:3px;top:1299px;width:1484px;height:1px;background:#e8e8e8"></div>
<div class="t" style="left:15.5px;top:1238.06px;font-size:12px;color:#aaa7a3;font-weight:400;font-family:'Liberation Mono',monospace;letter-spacing:0px;transform:scaleX(0.873);transform-origin:0 0;">13:45:03.696</div>
<div class="t" style="left:115px;top:1238.06px;font-size:12px;color:#231f1b;font-weight:400;font-family:'Liberation Mono',monospace;letter-spacing:0px;transform:scaleX(0.878);transform-origin:0 0;-webkit-text-stroke:0.45px #231f1b;">-</div>
<div class="a" style="left:262.5px;top:1239px;width:87px;height:24px;background:#f1f0ee;border-radius:8px"></div>
<div class="t" style="left:270.7px;top:1242.11px;font-size:12.8px;color:#3a3733;font-weight:400;font-family:'Liberation Mono',monospace;letter-spacing:0px;transform:scaleX(0.76);transform-origin:0 0;">ENGINE_EVENT</div>
<div class="t" style="left:413px;top:1241.76px;font-size:12px;color:#231f1b;font-weight:400;font-family:'Liberation Mono',monospace;letter-spacing:0px;transform:scaleX(0.873);transform-origin:0 0;">Multiprocess executor: parent process exiting after 2.26s (pid: 11635)</div>
<div class="a dots" style="left:413.5px;top:1263.5px;width:1074px;height:25px;border:1px solid #e6e5e3;border-right:none"></div>
<div class="a" style="left:449.5px;top:1263.5px;width:1px;height:25px;background:#e6e5e3"></div>
<div class="t" style="left:422.0px;top:1267.26px;font-size:12px;color:#9c9995;font-weight:400;font-family:'Liberation Mono',monospace;letter-spacing:0px;transform:scaleX(0.873);transform-origin:0 0;">pid</div>
<div class="t" style="left:458.5px;top:1267.26px;font-size:12px;color:#231f1b;font-weight:400;font-family:'Liberation Mono',monospace;letter-spacing:0px;transform:scaleX(0.873);transform-origin:0 0;">11635</div>
<div class="a" style="left:3px;top:1332px;width:1484px;height:1px;background:#e8e8e8"></div>
<div class="t" style="left:15.5px;top:1303.06px;font-size:12px;color:#aaa7a3;font-weight:400;font-family:'Liberation Mono',monospace;letter-spacing:0px;transform:scaleX(0.873);transform-origin:0 0;">13:45:03.701</div>
<div class="t" style="left:115px;top:1303.06px;font-size:12px;color:#231f1b;font-weight:400;font-family:'Liberation Mono',monospace;letter-spacing:0px;transform:scaleX(0.878);transform-origin:0 0;-webkit-text-stroke:0.45px #231f1b;">-</div>
<div class="a" style="left:262.5px;top:1304px;width:81px;height:24px;border-radius:8px;background:#e4f1ee"></div>
<div class="t" style="left:270.7px;top:1307.11px;font-size:12.8px;color:#3f9d7c;font-weight:400;font-family:'Liberation Mono',monospace;letter-spacing:0px;transform:scaleX(0.76);transform-origin:0 0;">RUN_SUCCESS</div>
<div class="t" style="left:413px;top:1306.76px;font-size:12px;color:#231f1b;font-weight:400;font-family:'Liberation Mono',monospace;letter-spacing:0px;transform:scaleX(0.873);transform-origin:0 0;">Finished execution of run for "__ASSET_JOB".</div>
<div class="a" style="left:3px;top:1365px;width:1484px;height:1px;background:#e8e8e8"></div>
<div class="t" style="left:15.5px;top:1336.06px;font-size:12px;color:#aaa7a3;font-weight:400;font-family:'Liberation Mono',monospace;letter-spacing:0px;transform:scaleX(0.873);transform-origin:0 0;">13:45:03.716</div>
<div class="t" style="left:115px;top:1336.06px;font-size:12px;color:#231f1b;font-weight:400;font-family:'Liberation Mono',monospace;letter-spacing:0px;transform:scaleX(0.878);transform-origin:0 0;-webkit-text-stroke:0.45px #231f1b;">-</div>
<div class="a" style="left:262.5px;top:1337px;width:87px;height:24px;background:#f1f0ee;border-radius:8px"></div>
<div class="t" style="left:270.7px;top:1340.11px;font-size:12.8px;color:#3a3733;font-weight:400;font-family:'Liberation Mono',monospace;letter-spacing:0px;transform:scaleX(0.76);transform-origin:0 0;">ENGINE_EVENT</div>
<div class="t" style="left:413px;top:1339.76px;font-size:12px;color:#231f1b;font-weight:400;font-family:'Liberation Mono',monospace;letter-spacing:0px;transform:scaleX(0.873);transform-origin:0 0;">Process for run exited (pid: 11635).</div>
<div class="a dots" style="left:1487px;top:814px;width:14px;height:602px"></div>
<div class="a" style="left:1487px;top:814px;width:1px;height:602px;background:#e8e8e8"></div>
<div class="a" style="left:1491px;top:1064px;width:8px;height:349px;background:#c0bfbc;border-radius:4px"></div>
<svg class="a" style="left:839px;top:1106px" width="13" height="14" viewBox="0 0 13 14"><rect x="1.5" y="2" width="10" height="11" rx="1" stroke="#8f8c88" stroke-width="1.2" fill="none"/><rect x="4" y="0.8" width="5" height="2.4" fill="#8f8c88"/><path d="M3.8 6 H9.2 M3.8 8.2 H9.2 M3.8 10.4 H9.2" stroke="#8f8c88" stroke-width="1"/></svg>
<svg class="a" style="left:839px;top:1171px" width="13" height="14" viewBox="0 0 13 14"><rect x="1.5" y="2" width="10" height="11" rx="1" stroke="#8f8c88" stroke-width="1.2" fill="none"/><rect x="4" y="0.8" width="5" height="2.4" fill="#8f8c88"/><path d="M3.8 6 H9.2 M3.8 8.2 H9.2 M3.8 10.4 H9.2" stroke="#8f8c88" stroke-width="1"/></svg>
<div class="a" style="left:0px;top:0px;width:3px;height:1416px;background:#0f0d0b;z-index:50"></div>
<div class="a" style="left:3px;top:0px;width:1498px;height:1px;background:#6d6c69;z-index:50"></div>
<svg class="a" style="left:3px;top:1404px" width="12" height="12" viewBox="0 0 12 12"><path d="M0 0 Q0 12 12 12 L0 12 Z" fill="#0f0d0b"/></svg>
<svg class="a" style="left:1489px;top:1404px" width="12" height="12" viewBox="0 0 12 12"><path d="M12 0 Q12 12 0 12 L12 12 Z" fill="#0f0d0b"/></svg>
</body></html>
